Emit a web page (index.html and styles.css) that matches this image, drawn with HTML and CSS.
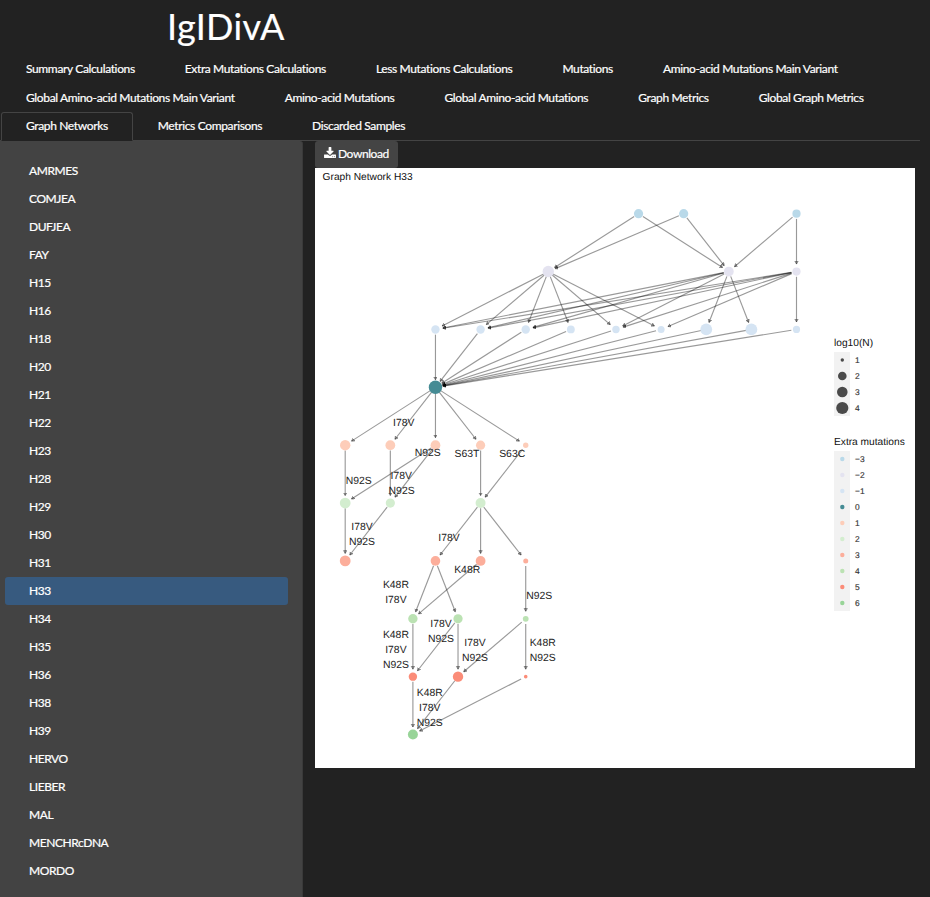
FILE: index.html
```html
<!DOCTYPE html>
<html lang="en">
<head>
<meta charset="utf-8">
<title>IgIDivA</title>
<link rel="stylesheet" href="styles.css">
</head>
<body>
<h1 class="title">IgIDivA</h1>
<nav class="tabs">
  <a class="tab">Summary Calculations</a><a class="tab">Extra Mutations Calculations</a><a class="tab">Less Mutations Calculations</a><a class="tab">Mutations</a><a class="tab">Amino-acid Mutations Main Variant</a><a class="tab">Global Amino-acid Mutations Main Variant</a><a class="tab">Amino-acid Mutations</a><a class="tab">Global Amino-acid Mutations</a><a class="tab">Graph Metrics</a><a class="tab">Global Graph Metrics</a><a class="tab active">Graph Networks</a><a class="tab">Metrics Comparisons</a><a class="tab">Discarded Samples</a>
</nav>
<div class="content">
  <ul class="samples">
    <li>AMRMES</li><li>COMJEA</li><li>DUFJEA</li><li>FAY</li><li>H15</li><li>H16</li><li>H18</li><li>H20</li><li>H21</li><li>H22</li><li>H23</li><li>H28</li><li>H29</li><li>H30</li><li>H31</li><li class="selected">H33</li><li>H34</li><li>H35</li><li>H36</li><li>H38</li><li>H39</li><li>HERVO</li><li>LIEBER</li><li>MAL</li><li>MENCHRcDNA</li><li>MORDO</li>
  </ul>
  <main class="panel">
    <a class="download"><svg class="icon" viewBox="0 0 1664 1536"><path fill="currentColor" d="M1280 1216q0-26-19-45t-45-19-45 19-19 45 19 45 45 19 45-19 19-45zm256 0q0-26-19-45t-45-19-45 19-19 45 19 45 45 19 45-19 19-45zm128-224v320q0 40-28 68t-68 28H96q-40 0-68-28t-28-68V992q0-40 28-68t68-28h465l135 136q58 56 136 56t136-56l136-136h464q40 0 68 28t28 68zm-325-569q17 41-14 70l-448 448q-18 19-45 19t-45-19L339 493q-31-29-14-70 17-39 59-39h256V-64q0-26 19-45t45-19h256q26 0 45 19t19 45v448h256q42 0 59 39z"/></svg>Download</a>
    <svg class="plot" id="plot" viewBox="0 0 600 600" width="600" height="600">
      <defs><marker id="arrow" markerUnits="userSpaceOnUse" markerWidth="6" markerHeight="6" refX="3" refY="2" orient="auto"><path class="head" d="M0.2 0.3L3 2L0.2 3.7Z"/></marker></defs>
    </svg>
  </main>
</div>
<script src="graph.js"></script>
</body>
</html>
```
FILE: styles.css
```css
* { box-sizing: border-box; }
body { margin: 0; height: 897px; overflow: hidden; background: #222; color: #fff; font: 12px/18px Lato, sans-serif; letter-spacing: -.43px; -webkit-text-stroke: .2px #fff; display: flex; flex-direction: column; }
.title { flex: none; margin: 6px 0 0 167px; height: 49px; font-size: 36px; line-height: 40px; font-weight: 400; letter-spacing: .4px; }
.tabs { flex: none; display: flex; flex-wrap: wrap; align-content: flex-start; width: 920px; height: 86px; padding-left: 1px; border-bottom: 1px solid #444; letter-spacing: -.36px; }
.tab { height: 28.6px; padding: 4px 24px; border: 1px solid transparent; border-radius: 3px 3px 0 0; white-space: nowrap; }
.tab.active { background: #222; border-color: #444 #444 #222; height: 28.8px; }
.content { flex: 1; display: flex; min-height: 0; }
.samples { flex: none; list-style: none; margin: 0; width: 303px; padding: 16px 14px 0 5px; background: #434343; border-right: 1px solid #3a3a3a; border-radius: 0 3px 0 0; }
.samples li { height: 28px; padding: 5px 24px; border-radius: 3px; }
.samples .selected { background: #375a7f; }
.panel { margin-left: 12px; }
.download { display: flex; align-items: center; width: 83px; height: 27px; padding: 0 0 2px 9px; gap: 2px; background: #444; border-radius: 3px; }
.icon { width: 12px; height: 11px; overflow: visible; }
.plot { display: block; background: #fff; font-family: "Liberation Sans", Arial, sans-serif; letter-spacing: 0; -webkit-text-stroke: 0; text-rendering: geometricPrecision; }
.edge { stroke: #000; stroke-opacity: .4; stroke-width: 1.15; }
.head { fill: #000; fill-opacity: .25; stroke: #000; stroke-opacity: .4; stroke-width: .8; }
.label { font-size: 10.4px; fill: #222; text-anchor: middle; }
.heading { font-size: 10.2px; fill: #111; }
.tick { font-size: 8.4px; fill: #333; stroke: #333; stroke-width: .15; }
.key { fill: #f2f2f2; }
.dot { fill: #4a4a4a; }
```
FILE: graph.js
```js
const plot = document.getElementById('plot');
function add(tag, attrs, text) {
  const el = document.createElementNS('http://www.w3.org/2000/svg', tag);
  for (const k in attrs) el.setAttribute(k, attrs[k]);
  if (text) el.textContent = text;
  plot.appendChild(el);
}
const X = c => 30.2 + 45.13 * c;
const Y = r => 45.7 + 57.87 * r;
const colors = ['#b9d9e9', '#e4e3f0', '#d5e4f3', '#458b94', '#fdcdb9', '#d3edcf', '#fcae9b', '#bbe2b3', '#fb8c78', '#98d498'];
// Per level: [column, radius, target columns in the next level]
const levels = [
  [[6.5, 4.6, [4.5, 8.5]], [7.5, 4.6, [4.5, 8.5]], [10, 4.1, [8.5, 10]]],
  [[4.5, 5.7, [2, 3, 4, 5, 6, 7]], [8.5, 4.9, [2, 3, 4, 6, 8, 9]], [10, 4.1, [2, 3, 4, 6, 7, 10]]],
  [[2, 4.2, [2]], [3, 4.2, [2]], [4, 4.2, [2]], [5, 3.9, [2]], [6, 3.7, [2]], [7, 3.5, [2]], [8, 5.9, [2]], [9, 5.9, [2]], [10, 3.6, [2]]],
  [[2, 6.7, [0, 1, 2, 3, 4]]],
  [[0, 5.2, [0]], [1, 4.9, [1]], [2, 4.9, [0, 1]], [3, 4.6, [3]], [4, 2.7, [3]]],
  [[0, 5.4, [0]], [1, 4.6, [0]], [3, 5, [2, 3, 4]]],
  [[0, 5.4, []], [2, 4.8, [1.5, 2.5]], [3, 4.9, [1.5]], [4, 2.5, [4]]],
  [[1.5, 4.7, [1.5]], [2.5, 4.6, [1.5, 2.5]], [4, 2.9, [2.5, 4]]],
  [[1.5, 4.2, [1.5]], [2.5, 5.2, [1.5]], [4, 1.8, [1.5]]],
  [[1.5, 5, []]]
];
levels.forEach((nodes, r) => nodes.forEach(([c, , targets]) => targets.forEach(t => {
  const dx = X(t) - X(c), dy = Y(r + 1) - Y(r), d = Math.hypot(dx, dy);
  add('line', { class: 'edge', x1: X(c) + dx / d * 5.2, y1: Y(r) + dy / d * 5.2,
    x2: X(t) - dx / d * 7.5, y2: Y(r + 1) - dy / d * 7.5, 'marker-end': 'url(#arrow)' });
})));
levels.forEach((nodes, r) => nodes.forEach(([c, radius]) =>
  add('circle', { cx: X(c), cy: Y(r), r: radius, fill: colors[r] })));
[[88.8, 257.9, 'I78V'], [112.8, 287.9, 'N92S'], [151.9, 288.9, 'S63T'], [197.2, 288.9, 'S63C'],
 [43.7, 315.5, 'N92S'], [86.2, 310.5, 'I78V'], [86.6, 325.6, 'N92S'], [47, 361.8, 'I78V'], [47, 376.9, 'N92S'],
 [134, 373.2, 'I78V'], [152.2, 404.6, 'K48R'], [80.9, 419.8, 'K48R'], [80.9, 435, 'I78V'], [224.2, 431, 'N92S'],
 [126, 459, 'I78V'], [126, 474, 'N92S'], [80.9, 470, 'K48R'], [80.9, 485, 'I78V'], [80.9, 500, 'N92S'],
 [160, 477.7, 'I78V'], [160, 492.9, 'N92S'], [227.7, 477.7, 'K48R'], [227.7, 492.9, 'N92S'],
 [114.8, 528, 'K48R'], [114.8, 543.2, 'I78V'], [114.8, 558.4, 'N92S']
].forEach(([x, y, t]) => add('text', { class: 'label', x, y }, t));

add('text', { class: 'heading', x: 7.6, y: 12.3 }, 'Graph Network H33');
add('text', { class: 'heading', x: 519, y: 178 }, 'log10(N)');
add('rect', { class: 'key', x: 519, y: 184, width: 16, height: 64 });
[1.7, 4.3, 5.3, 6.1].forEach((r, i) => {
  add('circle', { class: 'dot', cx: 527.3, cy: 192 + i * 16, r });
  add('text', { class: 'tick', x: 540, y: 195 + i * 16 }, String(i + 1));
});
add('text', { class: 'heading', x: 519, y: 276.6 }, 'Extra mutations');
add('rect', { class: 'key', x: 519, y: 283, width: 16, height: 160 });
colors.forEach((fill, i) => {
  add('circle', { cx: 527.3, cy: 291 + i * 16, r: 2.2, fill });
  add('text', { class: 'tick', x: 540, y: 294 + i * 16 }, String(i - 3).replace('-', '−'));
});
```
